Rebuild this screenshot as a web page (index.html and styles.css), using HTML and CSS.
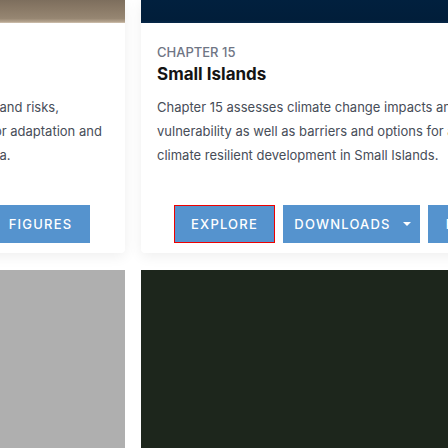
FILE: index.html
```html
<!DOCTYPE html>
<html lang="en">
<head>
<meta charset="utf-8">
<link rel="stylesheet" href="styles.css">
</head>
<body>
<div class="track">
  <div class="column">
    <div class="card">
      <div class="cover cover-sand"></div>
      <div class="card-body">
        <div class="eyebrow">CHAPTER 14</div>
        <h2 class="title">North America</h2>
        <p class="summary">Chapter 14 assesses climate change impacts and risks, vulnerability as well as barriers and options for adaptation and climate resilient development in North America.</p>
        <div class="actions">
          <a class="btn btn-explore">EXPLORE</a>
          <a class="btn btn-downloads">DOWNLOADS <span class="caret"></span></a>
          <a class="btn btn-figures">FIGURES</a>
        </div>
      </div>
    </div>
    <div class="media media-grey"></div>
  </div>
  <div class="column">
    <div class="card">
      <div class="cover cover-navy"></div>
      <div class="card-body">
        <div class="eyebrow">CHAPTER 15</div>
        <h2 class="title">Small Islands</h2>
        <p class="summary">Chapter 15 assesses climate change impacts and risks, vulnerability as well as barriers and options for adaptation and climate resilient development in Small Islands.</p>
        <div class="actions">
          <a class="btn btn-explore btn-active">EXPLORE</a>
          <a class="btn btn-downloads">DOWNLOADS <span class="caret"></span></a>
          <a class="btn btn-figures">FIGURES</a>
        </div>
      </div>
    </div>
    <div class="media media-dark"></div>
  </div>
</div>
</body>
</html>
```
FILE: styles.css
```css
* { box-sizing: border-box; }
html, body { margin: 0; padding: 0; background: #fff; overflow: hidden; }
body { font-family: Inter, "Noto Sans", sans-serif; width: 448px; height: 448px; }

.track {
  display: flex;
  gap: 16px;
  margin-left: -296px;
}
.column {
  display: flex;
  flex-direction: column;
  gap: 17px;
  width: 421px;
  flex: none;
}
.card {
  background: #fff;
  border-radius: 0 0 4px 4px;
  box-shadow: 0 3px 14px rgba(0,0,0,0.07);
}
.cover { height: 23px; }
.cover-sand {
  background: linear-gradient(180deg, #7d6e5d 0%, #8a7a67 40%, #968672 80%, #b3a28d 94%, #d2c4b2 100%);
}
.cover-navy {
  background: linear-gradient(180deg, #01203e 0%, #011e3a 85%, #07284a 100%);
}
.card-body {
  padding: 21px 16px 10px 16px;
}
.eyebrow {
  font-size: 13px;
  line-height: 16px;
  font-weight: 500;
  color: #6f7584;
}
.title {
  margin: 2px 0 0 0;
  font-size: 17px;
  line-height: 24px;
  font-weight: 700;
  color: #141414;
}
.summary {
  margin: 9px 0 0 0;
  font-size: 13px;
  line-height: 24px;
  color: #474d58;
}
.actions {
  display: flex;
  gap: 8px;
  margin-top: 38px;
  padding-left: 17px;
  white-space: nowrap;
}
.btn {
  display: flex;
  align-items: center;
  justify-content: center;
  gap: 12px;
  flex: none;
  height: 38px;
  background: #5593ce;
  color: #fff;
  font-size: 13px;
  font-weight: 500;
  letter-spacing: 1.2px;
  border: 1px solid #5593ce;
}
.btn-explore { width: 101px; }
.btn-downloads { width: 137px; padding-left: 2px; }
.btn-figures { width: 99px; }
.btn-active { border-color: #ee0000; }
.caret {
  width: 0; height: 0;
  border-left: 4px solid transparent;
  border-right: 4px solid transparent;
  border-top: 4px solid #fff;
}
.media { height: 200px; }
.media-grey { background: #afafaf; }
.media-dark { background: #1d261c; }
```
